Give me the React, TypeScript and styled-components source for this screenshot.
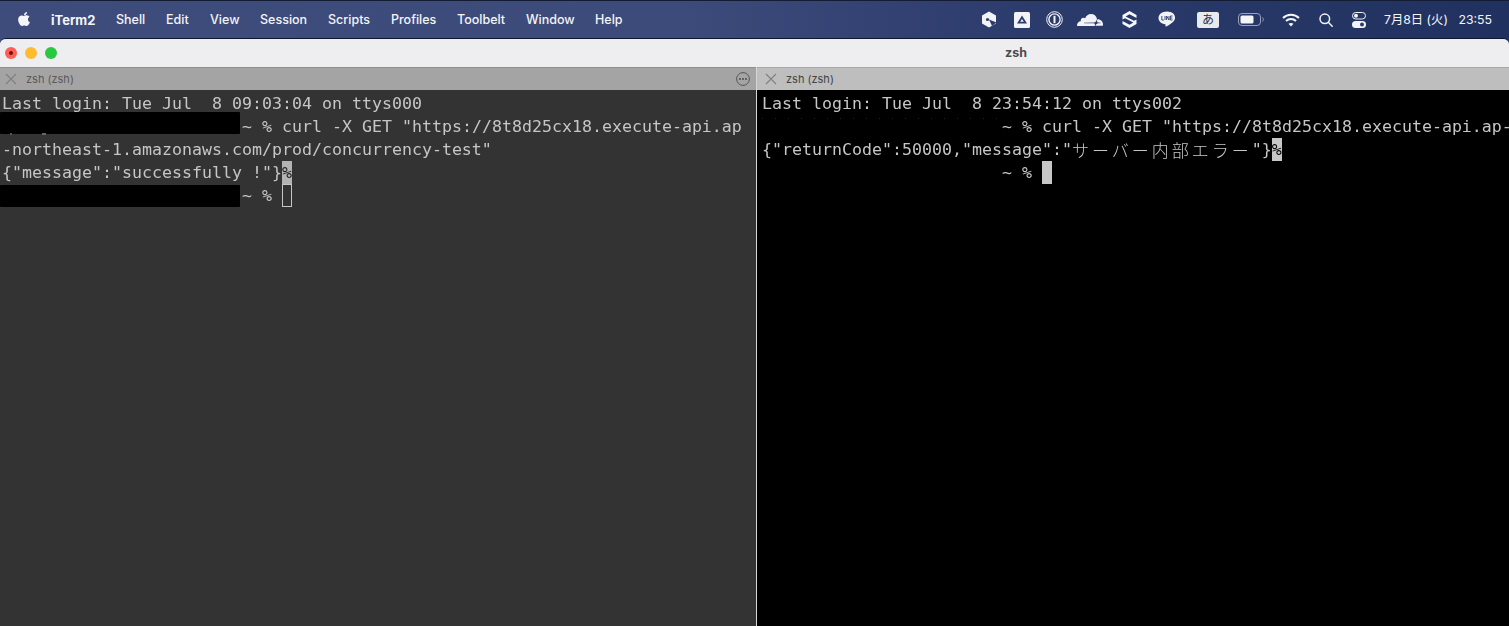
import React from "react";
import styled, { createGlobalStyle } from "styled-components";
import { FaApple } from "react-icons/fa";
import { SiCloudflare } from "react-icons/si";

const Global = createGlobalStyle`
  html, body { margin: 0; padding: 0; background: #333; overflow: hidden; }
  #root { width: 1509px; height: 626px; }
`;

const Screen = styled.div`
  width: 1509px;
  height: 626px;
  display: flex;
  flex-direction: column;
  overflow: hidden;
  background: linear-gradient(90deg, #3e4c7c 0%, #3d4b7b 45%, #2a3a6a 70%, #21315f 100%);
`;

const MenuBar = styled.header`
  height: 38px;
  flex: none;
  display: flex;
  align-items: center;
  border-top: 1px solid #141c34;
  box-sizing: border-box;
  font-family: Inter, "Noto Sans CJK JP", sans-serif;
  font-size: 12.5px;
  font-weight: 500;
  color: #f4f5f8;
`;

const AppleSlot = styled.span`
  display: flex;
  width: 51px;
  padding-left: 16px;
  box-sizing: border-box;
  font-size: 16px;
  margin-top: -2px;
`;

const MenuItem = styled.span<{ $x: number; $bold?: boolean }>`
  width: ${(p) => p.$x}px;
  flex: none;
  font-weight: ${(p) => (p.$bold ? 700 : 500)};
  font-size: ${(p) => (p.$bold ? 13 : 12.5)}px;
  white-space: nowrap;
`;

const Status = styled.div`
  margin-left: auto;
  display: flex;
  align-items: center;
  height: 100%;
`;

const Slot = styled.span<{ $w: number }>`
  width: ${(p) => p.$w}px;
  flex: none;
  display: flex;
  align-items: center;
  justify-content: center;
  color: #f2f3f7;
`;

const ImeBadge = styled.span`
  width: 22px;
  height: 16px;
  border-radius: 2px;
  background: #e9eaee;
  color: #2a3555;
  font-size: 12px;
  font-weight: 400;
  line-height: 16px;
  text-align: center;
`;

const Clock = styled.span`
  display: flex;
  align-items: baseline;
  justify-content: space-between;
  width: 132px;
  padding: 0 17px 0 7px;
  box-sizing: border-box;
  font-size: 12.3px;
  line-height: 16px;
  font-weight: 400;
  white-space: pre;
`;

const Window = styled.main`
  flex: 1;
  display: flex;
  flex-direction: column;
  border-radius: 6px 6px 0 0;
  overflow: hidden;
  border-top: 1px solid #10182f;
  min-height: 0;
`;

const TitleBar = styled.div`
  height: 28px;
  flex: none;
  display: flex;
  align-items: center;
  background: #eeeef0;
  padding-left: 5px;
`;

const Lights = styled.div`
  display: flex;
  gap: 8px;
`;

const Light = styled.span<{ $c: string }>`
  width: 12px;
  height: 12px;
  border-radius: 50%;
  background: ${(p) => p.$c};
  display: flex;
  align-items: center;
  justify-content: center;
`;

const CloseDot = styled.span`
  width: 4px;
  height: 4px;
  border-radius: 50%;
  background: #7a0d0a;
`;

const Title = styled.span`
  margin: -2px 0 0 948px;
  font-family: Inter, sans-serif;
  font-size: 12.5px;
  font-weight: 700;
  color: #4b4b4d;
`;

const Panes = styled.div`
  flex: 1;
  display: grid;
  grid-template-columns: 756px 1px 1fr;
  min-height: 0;
`;

const Divider = styled.div`
  background: #d6d6d6;
`;

const Pane = styled.section`
  display: flex;
  flex-direction: column;
  min-width: 0;
`;

const Tab = styled.div<{ $active?: boolean }>`
  height: 23px;
  flex: none;
  box-sizing: border-box;
  border-top: 1px solid ${(p) => (p.$active ? "#a9a9a9" : "#8f8f8f")};
  background: ${(p) => (p.$active ? "#bebebe" : "#a4a4a4")};
  display: flex;
  align-items: center;
  padding: 0 6px 0 ${(p) => (p.$active ? 8 : 5)}px;
  font-family: Inter, sans-serif;
  font-size: 11px;
  color: ${(p) => (p.$active ? "#444" : "#5a5a5a")};
  gap: 9px;
`;

const TabMenu = styled.span`
  margin-left: auto;
  display: flex;
`;

const Term = styled.div<{ $dark?: boolean }>`
  flex: 1;
  background: ${(p) => (p.$dark ? "#000" : "#333333")};
  color: #c6c6c6;
  padding: 2px 0 0 ${(p) => (p.$dark ? 5 : 2)}px;
  font-family: "DejaVu Sans Mono", "Noto Sans CJK JP", monospace;
  font-size: 16.6px;
  letter-spacing: 0.007px;
  line-height: 23px;
  overflow: hidden;
  filter: grayscale(1);
`;

const Line = styled.div`
  display: flex;
  height: 23px;
  white-space: pre;
`;

const Redact = styled.span<{ $top: number; $trace?: boolean }>`
  flex: none;
  position: relative;
  width: 240px;
  height: 22px;
  margin: ${(p) => p.$top}px 2px 0 -2px;
  background: #000;
  border-radius: 1px;
  &::after {
    content: "";
    display: ${(p) => (p.$trace ? "block" : "none")};
    position: absolute;
    left: 10px;
    top: 21px;
    width: 40px;
    height: 2px;
    background: linear-gradient(90deg, #555 0 2px, transparent 2px 32px, #666 32px 36px, transparent 36px);
  }
`;

const Blank = styled.span<{ $dots?: boolean }>`
  flex: none;
  width: 240px;
  height: 23px;
  background-image: ${(p) =>
    p.$dots ? "repeating-linear-gradient(90deg, #242424 0 1px, transparent 1px 13px)" : "none"};
  background-size: 100% 1px;
  background-position: 0 3px;
  background-repeat: no-repeat;
`;

const Wide = styled.span`
  font-family: "Noto Sans CJK JP", sans-serif;
  font-size: 17px;
  letter-spacing: 3px;
  font-weight: 300;
`;

const Inverse = styled.span<{ $bg: string; $fg: string }>`
  display: inline-block;
  width: 10px;
  height: 23px;
  background: ${(p) => p.$bg};
  color: ${(p) => p.$fg};
`;

const Cursor = styled.span<{ $solid?: boolean }>`
  display: inline-block;
  flex: none;
  width: 10px;
  height: 23px;
  box-sizing: border-box;
  background: ${(p) => (p.$solid ? "#c7c7c7" : "transparent")};
  border: 1px solid #c7c7c7;
`;

const CloseX = () => (
  <svg width="12" height="12" viewBox="0 0 12 12" fill="none" stroke="#808080" strokeWidth="1.1">
    <path d="M1 1l10 10M11 1L1 11" />
  </svg>
);

const Hex = () => (
  <svg width="16" height="17" viewBox="0 0 16 17" fill="#f2f3f7">
    <path d="M8 0.5L15 4.5V12.5L8 16.5L1 12.5V4.5Z" />
    <path d="M8 8.5L15.5 11.5L11 15Z" fill="#2b3b6b" />
    <circle cx="6.5" cy="8.5" r="1.6" fill="#2b3b6b" />
  </svg>
);

const DriveBox = () => (
  <svg width="16" height="16" viewBox="0 0 16 16">
    <rect width="16" height="16" rx="1.5" fill="#f2f3f7" />
    <path d="M8 3.5L13 11.5H3Z" fill="#2b3b6b" />
    <path d="M8 7L9.8 9.8H6.2Z" fill="#f2f3f7" />
  </svg>
);

const OnePass = () => (
  <svg width="17" height="17" viewBox="0 0 17 17" fill="none" stroke="#f2f3f7">
    <circle cx="8.5" cy="8.5" r="7.8" strokeWidth="1" />
    <circle cx="8.5" cy="8.5" r="5.6" strokeWidth="1.4" />
    <path d="M8.5 4.8V12.2" strokeWidth="2" />
  </svg>
);

const Layers = () => (
  <svg width="15" height="17" viewBox="0 0 15 17" fill="#f5f6f9">
    <path d="M7.5 0L14.5 4V7L7.5 3.2L3.6 5.4L12 9.8L14.5 8.4V13L7.5 17L0.5 13V10L7.5 13.8L11.4 11.6L3 7.2L0.5 8.6V4Z" />
  </svg>
);

const LineBubble = () => (
  <svg width="18" height="17" viewBox="0 0 18 17">
    <path
      d="M9 0.5C4.2 0.5 0.5 3.3 0.5 7c0 3.2 2.9 5.8 6.6 6.3.6.1.5.7.4 1.6-.1.8.4.8 1.2.4 2.4-1.3 8.3-4.5 8.3-8.3C17.5 3.3 13.8.5 9 .5Z"
      fill="#f2f3f7"
    />
    <path d="M3.8 5v4h2M7 5v4M8.6 9V5l2.4 4V5M14.6 5h-2.2v4h2.2M12.4 7h2" stroke="#2b3b6b" strokeWidth="0.9" fill="none" />
  </svg>
);

const Battery = () => (
  <svg width="26" height="13" viewBox="0 0 26 13" fill="none">
    <rect x="0.5" y="0.5" width="22" height="12" rx="3.5" stroke="#9aa2bb" />
    <rect x="2.5" y="2.5" width="13" height="8" rx="1.5" fill="#f4f5f8" />
    <path d="M24.5 4.5c1 .6 1 3.4 0 4" stroke="#9aa2bb" />
  </svg>
);

const Wifi = () => (
  <svg width="18" height="14" viewBox="0 0 18 14" fill="none" stroke="#f5f6f9" strokeWidth="2">
    <path d="M1 5C5.5 0.6 12.5 0.6 17 5" />
    <path d="M4 8C6.8 5.4 11.2 5.4 14 8" />
    <path d="M9 13.5L6.5 10.8C7.9 9.7 10.1 9.7 11.5 10.8Z" fill="#f5f6f9" stroke="none" />
  </svg>
);

const Search = () => (
  <svg width="14" height="14" viewBox="0 0 14 14" fill="none" stroke="#f2f3f7" strokeWidth="1.5">
    <circle cx="5.8" cy="5.8" r="4.8" />
    <path d="M9.3 9.3L13.2 13.2" strokeLinecap="round" />
  </svg>
);

const Control = () => (
  <svg width="14" height="16" viewBox="0 0 14 16">
    <rect x="0.5" y="0.5" width="13" height="6.5" rx="3.2" fill="none" stroke="#f2f3f7" />
    <circle cx="4" cy="3.7" r="2" fill="#f2f3f7" />
    <rect y="9" width="14" height="7" rx="3.5" fill="#f2f3f7" />
    <circle cx="10" cy="12.5" r="2" fill="#2b3b6b" />
  </svg>
);

const More = () => (
  <svg width="14" height="14" viewBox="0 0 14 14" fill="none">
    <circle cx="7" cy="7" r="6.4" stroke="#555" />
    <circle cx="4" cy="7" r="0.9" fill="#444" />
    <circle cx="7" cy="7" r="0.9" fill="#444" />
    <circle cx="10" cy="7" r="0.9" fill="#444" />
  </svg>
);

const menus: [string, number][] = [
  ["Shell", 50],
  ["Edit", 44],
  ["View", 50],
  ["Session", 68],
  ["Scripts", 63],
  ["Profiles", 66],
  ["Toolbelt", 69],
  ["Window", 69],
  ["Help", 40],
];

export default function App() {
  return (
    <Screen>
      <Global />
      <MenuBar>
        <AppleSlot>
          <FaApple />
        </AppleSlot>
        <MenuItem $x={65} $bold>
          iTerm2
        </MenuItem>
        {menus.map(([name, w]) => (
          <MenuItem key={name} $x={w}>
            {name}
          </MenuItem>
        ))}
        <Status>
          <Slot $w={34}><Hex /></Slot>
          <Slot $w={31}><DriveBox /></Slot>
          <Slot $w={34}><OnePass /></Slot>
          <Slot $w={38}><SiCloudflare size={26} /></Slot>
          <Slot $w={40}><Layers /></Slot>
          <Slot $w={36}><LineBubble /></Slot>
          <Slot $w={46}><ImeBadge>あ</ImeBadge></Slot>
          <Slot $w={40}><Battery /></Slot>
          <Slot $w={40}><Wifi /></Slot>
          <Slot $w={30}><Search /></Slot>
          <Slot $w={36}><Control /></Slot>
          <Clock>
            <span>7月8日 (火)</span>
            <span>23:55</span>
          </Clock>
        </Status>
      </MenuBar>
      <Window>
        <TitleBar>
          <Lights>
            <Light $c="#fc5f57"><CloseDot /></Light>
            <Light $c="#febb2e" />
            <Light $c="#29c840" />
          </Lights>
          <Title>zsh</Title>
        </TitleBar>
        <Panes>
          <Pane>
            <Tab>
              <CloseX />
              <span>zsh (zsh)</span>
              <TabMenu><More /></TabMenu>
            </Tab>
            <Term>
              <Line>Last login: Tue Jul  8 09:03:04 on ttys000</Line>
              <Line>
                <Redact $top={-3} $trace />
                {`~ % curl -X GET "https://8t8d25cx18.execute-api.ap`}
              </Line>
              <Line>-northeast-1.amazonaws.com/prod/concurrency-test"</Line>
              <Line>
                {`{"message":"successfully !"}`}
                <Inverse $bg="#b4b4b4" $fg="#222">%</Inverse>
              </Line>
              <Line>
                <Redact $top={1} />
                {"~ % "}
                <Cursor />
              </Line>
            </Term>
          </Pane>
          <Divider />
          <Pane>
            <Tab $active>
              <CloseX />
              <span>zsh (zsh)</span>
            </Tab>
            <Term $dark>
              <Line>Last login: Tue Jul  8 23:54:12 on ttys002</Line>
              <Line>
                <Blank $dots />
                {`~ % curl -X GET "https://8t8d25cx18.execute-api.ap-`}
              </Line>
              <Line>
                {`{"returnCode":50000,"message":"`}
                <Wide>サーバー内部エラー</Wide>
                {`"}`}
                <Inverse $bg="#c7c7c7" $fg="#000">%</Inverse>
              </Line>
              <Line>
                <Blank />
                {"~ % "}
                <Cursor $solid />
              </Line>
            </Term>
          </Pane>
        </Panes>
      </Window>
    </Screen>
  );
}
